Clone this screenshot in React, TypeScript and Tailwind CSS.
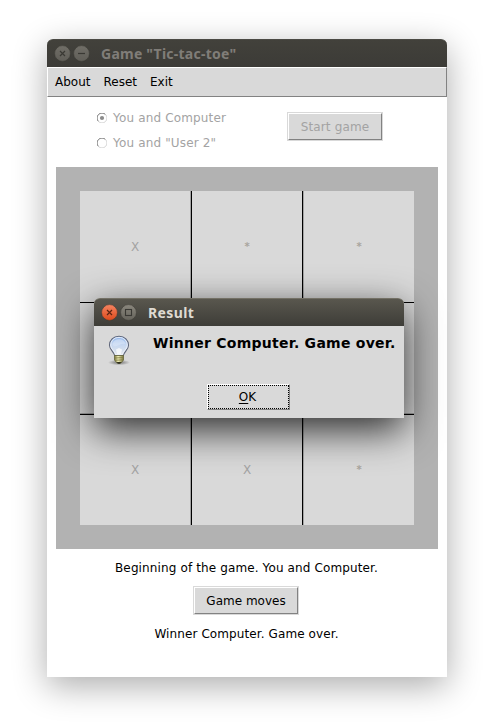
import React from 'react';

type ControlKind = 'close' | 'minimize' | 'maximize';

function WindowControl({ kind, active }: { kind: ControlKind; active?: boolean }) {
  const id = `${kind}-${active ? 'on' : 'off'}`;
  const orange = active && kind === 'close';
  const top = orange ? '#f58461' : active ? '#8a877d' : '#706e67';
  const bottom = orange ? '#dc4a1c' : active ? '#65635b' : '#605e58';
  const mark = orange ? '#5c2412' : '#3a3934';
  return (
    <svg width="17" height="17" viewBox="0 0 17 17" className="block">
      <defs>
        <linearGradient id={id} x1="0" y1="0" x2="0" y2="1">
          <stop offset="0" stopColor={top} />
          <stop offset="1" stopColor={bottom} />
        </linearGradient>
      </defs>
      <circle cx="8.5" cy="8.5" r="7.9" fill={`url(#${id})`} stroke={active ? '#3a3832' : '#393833'} strokeWidth="0.5" />
      {kind === 'close' && <path d="M6 6l5 5M11 6l-5 5" stroke={mark} strokeWidth="1.2" />}
      {kind === 'minimize' && <path d="M5 8.5h7" stroke={mark} strokeWidth="1.2" />}
      {kind === 'maximize' && <rect x="5.5" y="5.5" width="6" height="6" fill="none" stroke={mark} strokeWidth="1.1" />}
    </svg>
  );
}

function Bulb() {
  return (
    <svg width="32" height="32" viewBox="0 0 32 32" className="block">
      <defs>
        <linearGradient id="glass" x1="0" y1="0" x2="0" y2="1">
          <stop offset="0" stopColor="#8db3ea" />
          <stop offset="0.4" stopColor="#c3d6f1" />
          <stop offset="1" stopColor="#e4e6ea" />
        </linearGradient>
        <linearGradient id="brass" x1="0" y1="0" x2="1" y2="0">
          <stop offset="0" stopColor="#777539" />
          <stop offset="0.4" stopColor="#f4f1b8" />
          <stop offset="1" stopColor="#77733a" />
        </linearGradient>
        <radialGradient id="ground">
          <stop offset="0" stopColor="#444" stopOpacity="0.7" />
          <stop offset="1" stopColor="#444" stopOpacity="0" />
        </radialGradient>
      </defs>
      <ellipse cx="16" cy="28.500" rx="11" ry="2.800" fill="url(#ground)" />
      <path d="M16 2.200C10.300 2.200 6.500 6.200 6.500 11.300c0 4.400 4.400 6 5.100 10.200h8.800c.7-4.200 5.100-5.800 5.100-10.200 0-5.100-3.800-9.100-9.500-9.100z" fill="url(#glass)" stroke="#5f6679" strokeWidth="1.1" />
      <path d="M16 3.400c-5.100 0-8.300 3.600-8.300 7.900 0 4 4.100 5.200 5 9.200h6.600c.9-4 5-5.200 5-9.200 0-4.300-3.200-7.900-8.300-7.900z" fill="none" stroke="#edf2fb" strokeWidth="0.9" />
      <path d="M9.500 10.500c1.500 3 4.500 1.500 6.500.5s4.500-1.500 6.500-1c-1-6.500-12-6.500-13 .5z" fill="#dce8f8" fillOpacity="0.55" />
      <path d="M14 20l-1-4.500 3-1.500 3 1.500-1 4.500z" fill="#fff" fillOpacity="0.7" />
      <path d="M11.500 21.500h9v4.500l-2.500 3h-4l-2.500-3z" fill="url(#brass)" stroke="#66653a" strokeWidth="0.8" />
      <path d="M12 24l8-.5M12 26.300l8-.5" stroke="#7d7b42" strokeWidth="0.8" />
      <path d="M13.500 28h5l-1.500 1.700h-2z" fill="#30301f" />
    </svg>
  );
}

function Radio({ label, checked }: { label: string; checked?: boolean }) {
  return (
    <div className="flex h-[25px] items-center gap-[6px] text-[#a3a3a3]">
      <svg width="10" height="10" viewBox="0 0 10 10">
        <path d="M1.500 8.500A4.500 4.500 0 0 1 8.500 1.500" fill="none" stroke="#777" strokeWidth="1" />
        <path d="M8.500 1.500A4.500 4.500 0 0 1 1.500 8.500" fill="none" stroke="#d5d5d5" strokeWidth="1" />
        {checked && <circle cx="5" cy="5" r="2.1" fill="#8c8c8c" />}
      </svg>
      <span className="tracking-[0.16px]">{label}</span>
    </div>
  );
}

function PushButton({ label, size, disabled }: { label: string; size: string; disabled?: boolean }) {
  return (
    <button className={`${size} block border border-[#d9d9d9] bg-white`}>
      <span
        className={`flex h-full items-center justify-center border border-t-white border-l-white border-r-[#828282] border-b-[#828282] bg-[#d9d9d9] ${disabled ? 'tracking-[0.14px] text-[#a3a3a3]' : 'text-black'}`}
      >
        {label}
      </span>
    </button>
  );
}

const rows = [
  ['X', '*', '*'],
  ['', '', ''],
  ['X', 'X', '*'],
];
const colEdges = [
  'border-r border-r-black',
  'border-r border-r-black',
  'border-l border-l-[#a3a3a3]',
];
const rowEdges = ['border-b border-b-black', 'border-b border-b-black', ''];
const innerShade = [
  ['shadow-[inset_-1px_0_0_#a3a3a3]', '', ''],
  ['shadow-[inset_-1px_-1px_0_#a3a3a3]', 'shadow-[inset_0_-1px_0_#a3a3a3]', 'shadow-[inset_0_-1px_0_#a3a3a3]'],
  ['shadow-[inset_-1px_0_0_#a3a3a3]', '', ''],
];

function Board() {
  return (
    <div className="ml-[9px] h-[382px] w-[382px] bg-[#b2b2b2] p-6">
      <div className="grid h-[334px] w-[334px] grid-cols-[112px_111px_111px] grid-rows-[112px_112px_110px] bg-[#d9d9d9]">
        {rows.map((row, r) =>
          row.map((mark, c) => (
            <div
              key={`${r}${c}`}
              className={`flex items-center justify-center text-[#a3a3a3] ${colEdges[c]} ${rowEdges[r]} ${innerShade[r][c]} ${mark === '*' ? 'text-[10px] font-bold text-[#aaa69e]' : ''}`}
            >
              <span className={mark === 'X' && c === 0 ? 'pr-px' : ''}>{mark}</span>
            </div>
          )),
        )}
      </div>
    </div>
  );
}

function ResultDialog() {
  return (
    <div className="absolute top-[298px] left-[94px] h-[120px] w-[310px] rounded-t-[6px] bg-[#d9d9d9] shadow-[0_12px_38px_rgba(0,0,0,0.8)]">
      <div className="flex h-7 items-center rounded-t-[6px] border-t border-[#737065] bg-linear-to-b from-[#59574e] to-[#3e3d38] pl-[7px]">
        <WindowControl kind="close" active />
        <span className="ml-[2px]"><WindowControl kind="maximize" active /></span>
        <span className="ml-[11px] font-['Noto_Sans'] text-[14px] font-bold tracking-[0.4px] text-[#dfdbd2]">Result</span>
      </div>
      <div className="flex h-[50px] items-start pt-[8px] pl-[9px]">
        <Bulb />
        <span className="ml-[18px] text-[14px] leading-[18px] font-bold tracking-[0.26px] whitespace-nowrap text-black">Winner Computer. Game over.</span>
      </div>
      <button className="mt-[8px] ml-[113px] block h-[26px] w-[83px] border border-t-white border-l-white border-r-[#828282] border-b-[#828282] text-black">
        <span className="flex h-full items-center justify-center border border-dotted border-black pr-[2px]">
          <span className="underline underline-offset-2">O</span>K
        </span>
      </button>
    </div>
  );
}

export default function App() {
  return (
    <div className="relative h-[724px] w-[494px] overflow-hidden bg-white pt-[39px] pl-[47px] font-['DejaVu_Sans',sans-serif] text-[12px] leading-4">
      <div className="h-[638px] w-[400px] rounded-t-[6px] bg-white shadow-[0_9px_34px_rgba(0,0,0,0.33)]">
        <div className="flex h-7 items-center rounded-t-[6px] border-t border-[#4b4a44] bg-linear-to-b from-[#42413b] to-[#3c3b37] pl-[7px]">
          <WindowControl kind="close" />
          <span className="ml-[2px]"><WindowControl kind="minimize" /></span>
          <span className="ml-[11px] font-['Noto_Sans'] text-[14px] font-bold tracking-[0.24px] text-[#807d78]">Game "Tic-tac-toe"</span>
        </div>
        <div className="flex h-[30px] items-center gap-[13px] border border-t-white border-l-white border-r-[#828282] border-b-[#828282] bg-[#d9d9d9] pl-[7px] text-black">
          <span>About</span>
          <span>Reset</span>
          <span>Exit</span>
        </div>
        <div className="flex h-[70px] pt-[8px] pl-[50px]">
          <div className="w-[190px]">
            <Radio label="You and Computer" checked />
            <Radio label={'You and "User 2"'} />
          </div>
          <div className="pt-[7px]">
            <PushButton label="Start game" size="h-[29px] w-[96px]" disabled />
          </div>
        </div>
        <Board />
        <div className="flex flex-col items-center pt-[11px] text-black">
          <span className="pr-px tracking-[0.125px]">Beginning of the game. You and Computer.</span>
          <div className="mt-[10px] mr-[2px]">
            <PushButton label="Game moves" size="h-[29px] w-[106px]" />
          </div>
          <span className="mt-[11px] pr-px tracking-[0.1px]">Winner Computer. Game over.</span>
        </div>
      </div>
      <ResultDialog />
    </div>
  );
}
